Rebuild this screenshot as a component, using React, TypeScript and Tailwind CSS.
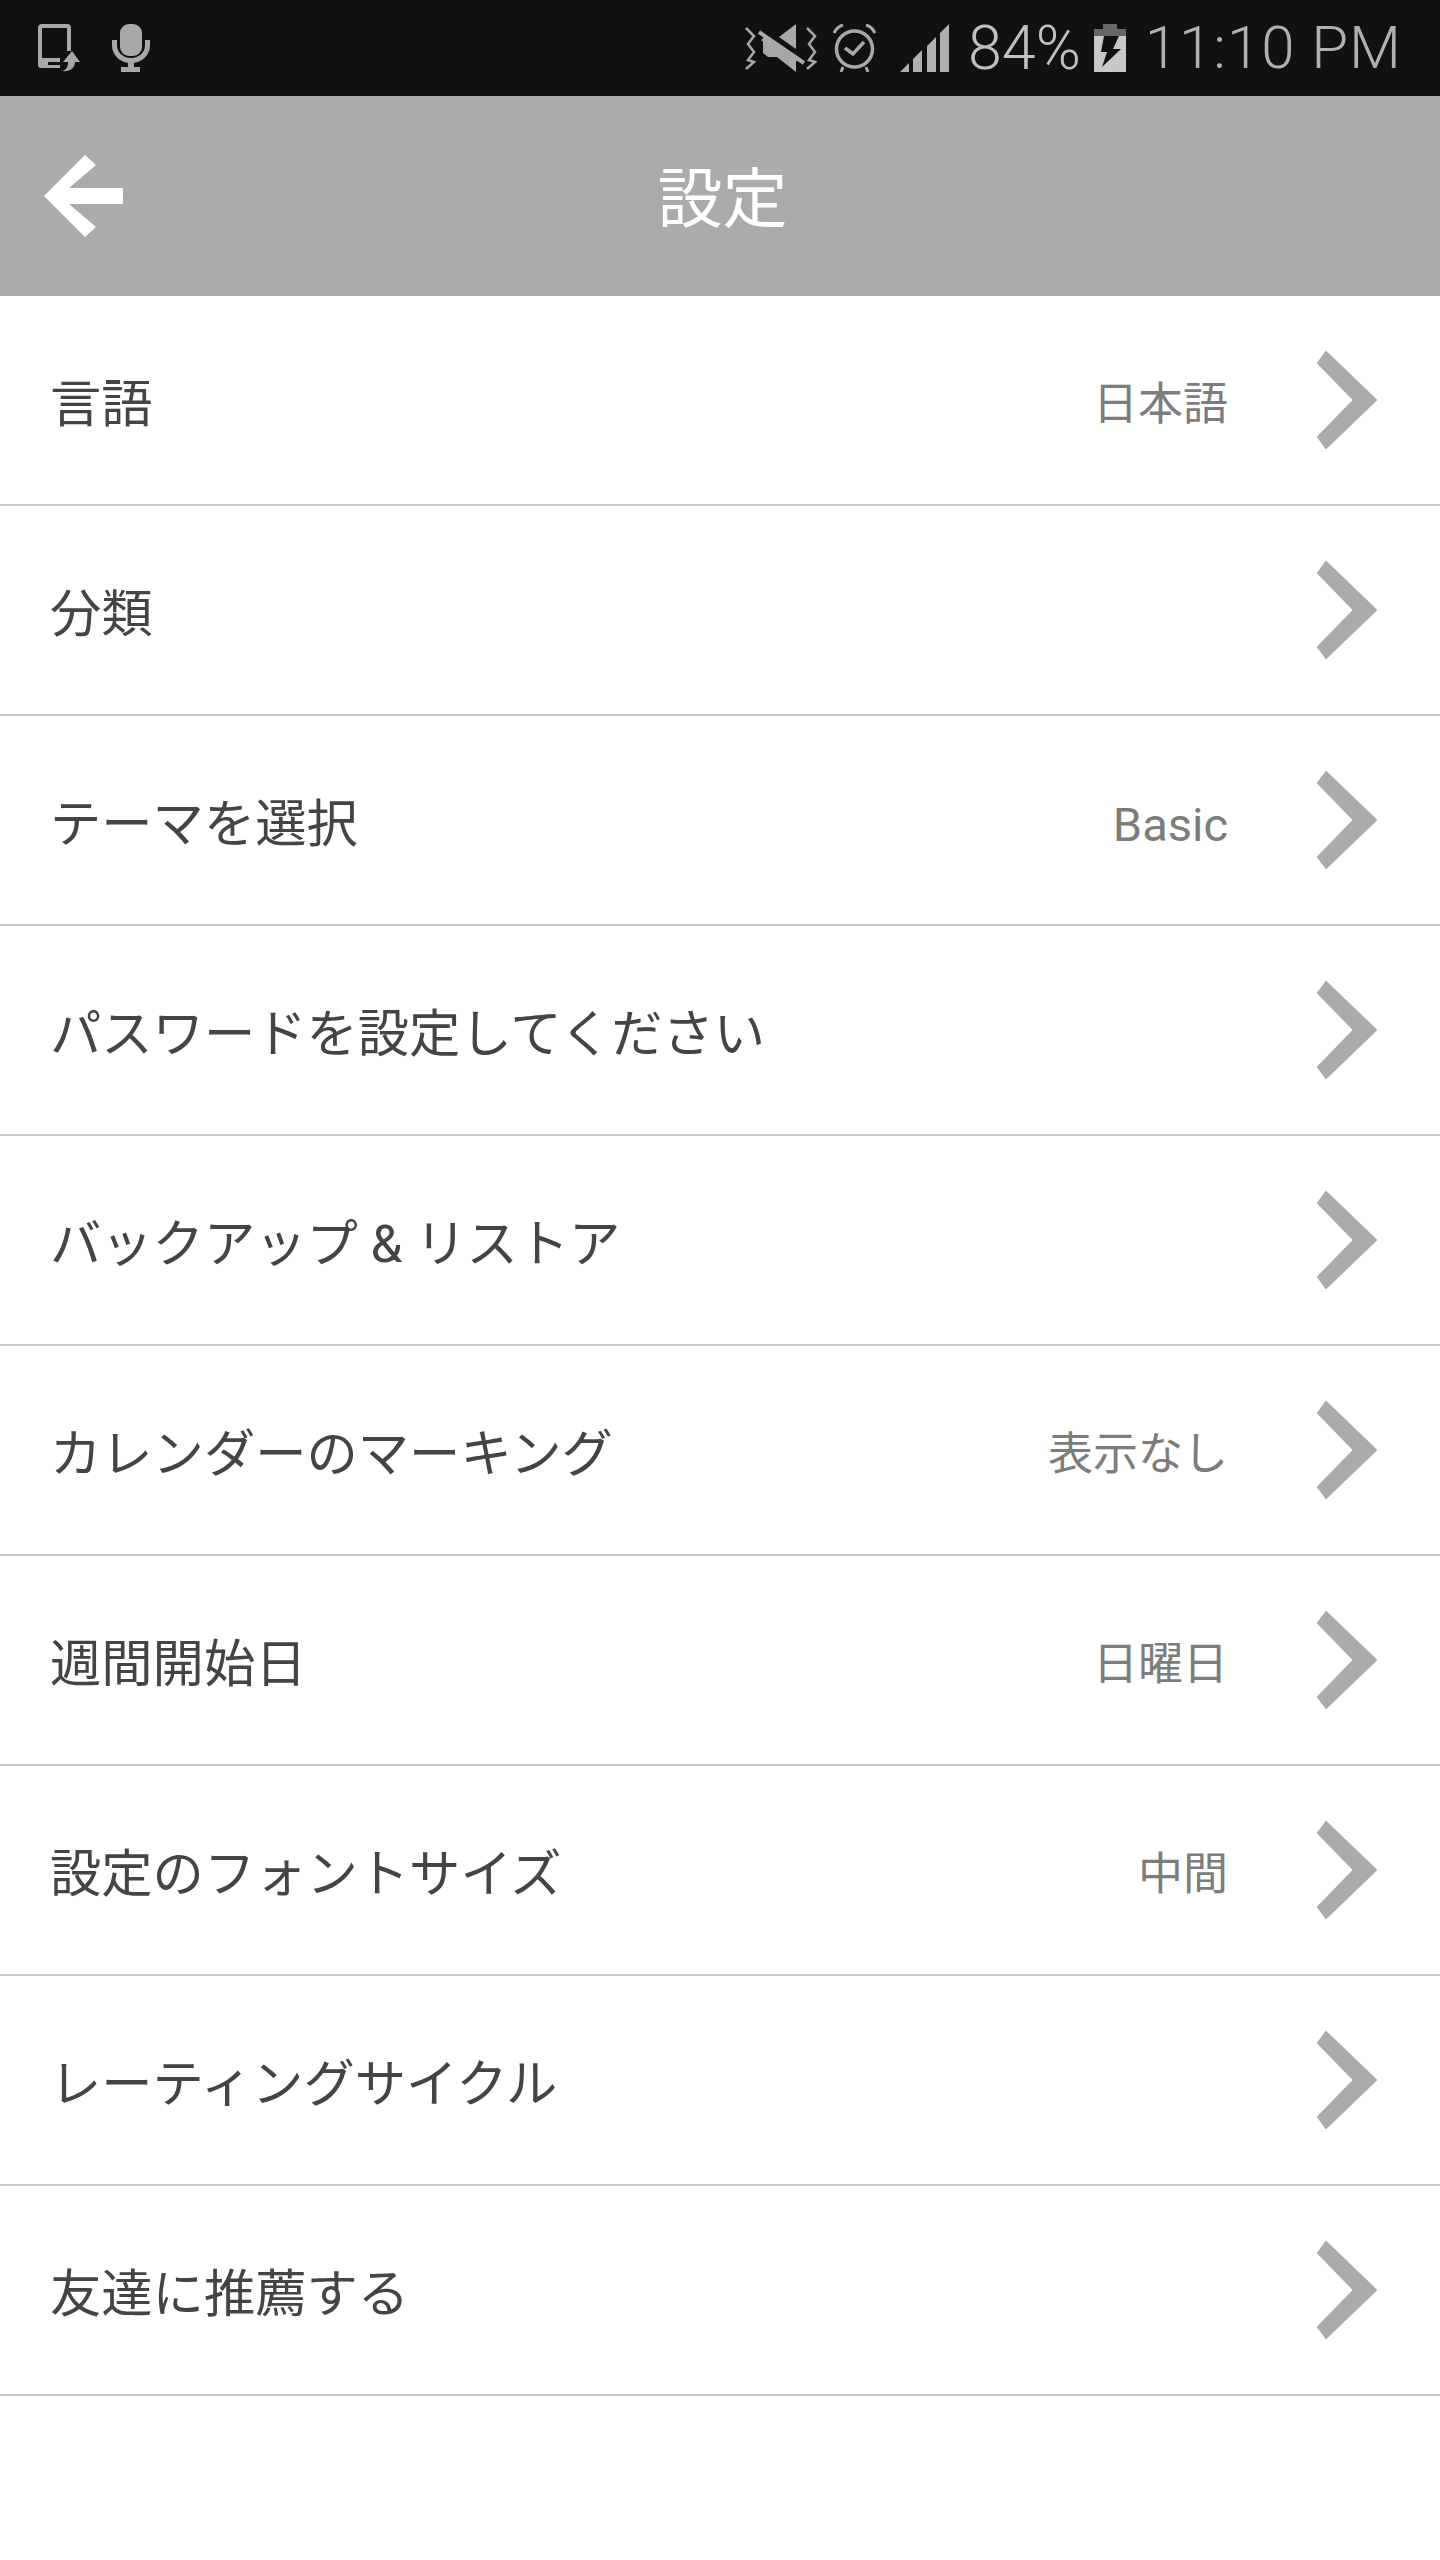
const font = { fontFamily: 'Roboto, "Noto Sans CJK JP", sans-serif' };
const thin = { fontFamily: "Roboto, sans-serif", fontWeight: 300 };

const rows = [
  { label: "言語", value: "日本語" },
  { label: "分類" },
  { label: "テーマを選択", value: "Basic", latin: true },
  { label: "パスワードを設定してください" },
  { label: "バックアップ & リストア" },
  { label: "カレンダーのマーキング", value: "表示なし" },
  { label: "週間開始日", value: "日曜日" },
  { label: "設定のフォントサイズ", value: "中間" },
  { label: "レーティングサイクル" },
  { label: "友達に推薦する" },
];

const StatusBar = () => (
  <div className="flex h-[96px] items-center justify-between bg-[#111111] pl-[38px] pr-[38px]">
    <div className="flex items-center gap-[32px]">
      <svg width="42" height="48" viewBox="0 0 42 48" fill="none">
        <path d="M2 38V4a2 2 0 0 1 2-2h25a2 2 0 0 1 2 2v23" stroke="#a8a8a8" strokeWidth="4" />
        <path d="M0 34h22v10H3a3 3 0 0 1-3-3z" fill="#a8a8a8" />
        <rect x="10" y="38" width="12" height="3" fill="#111111" />
        <path d="M34 27l8 11h-5c0 5-4 10-13 9 4-1 6-4 6-9h-5z" fill="#a8a8a8" />
      </svg>
      <svg width="38" height="48" viewBox="0 0 38 48" fill="none">
        <rect x="8" y="0" width="22" height="32" rx="9" fill="#a8a8a8" />
        <path d="M2.500 16v5c0 9 7 15.500 16.500 15.500s16.500-6.500 16.500-15.500v-5" stroke="#a8a8a8" strokeWidth="5" />
        <rect x="9" y="43" width="19" height="5" fill="#a8a8a8" />
        <rect x="16" y="37" width="6" height="7" fill="#a8a8a8" />
      </svg>
    </div>
    <div className="flex items-center">
      <svg width="72" height="48" viewBox="0 0 72 48" fill="none" className="mr-[16px]">
        <path d="M1 4l8 8-6 8 6 8-6 8 6 2-8 7M62 4l8 8-6 8 6 8-6 8 6 2-8 7" stroke="#a8a8a8" strokeWidth="2.500" />
        <path d="M51 0v25L34 13z" fill="#a8a8a8" />
        <path d="M18 14v15l5 4h9l19 15V38z" fill="#a8a8a8" />
        <path d="M14 8l45 31" stroke="#a8a8a8" strokeWidth="4" />
        <path d="M18 14l33 24" stroke="#a8a8a8" strokeWidth="6" />
      </svg>
      <svg width="43" height="48" viewBox="0 0 43 48" fill="none" className="mr-[24px]">
        <circle cx="21.500" cy="25" r="18" stroke="#a8a8a8" strokeWidth="3.500" />
        <path d="M12 24l8 6 11-12" stroke="#a8a8a8" strokeWidth="3.500" />
        <path d="M1 9c2-4 5-7 9-8M42 9c-2-4-5-7-9-8M10 43l-2 5M33 43l2 5" stroke="#a8a8a8" strokeWidth="3" />
      </svg>
      <svg width="49" height="48" viewBox="0 0 49 48" className="mr-[19px]">
        <path d="M0 48l9-9v9zM13 48V35l9-9v22zM27 48V22l9-9v35zM40 48V9l9-9v48z" fill="#b0b0b0" />
      </svg>
      <span className="mr-[13px] text-[61px] leading-none text-[#c0c0c0]" style={thin}>84%</span>
      <svg width="32" height="48" viewBox="0 0 32 48" className="mr-[19px]">
        <rect x="9" y="0" width="14" height="6" fill="#666666" />
        <rect x="0" y="5" width="32" height="7" fill="#666666" />
        <rect x="0" y="12" width="32" height="36" fill="#c8c8c8" />
        <path d="M10 12h15l-6 13h8L8 43l5-15H7z" fill="#111111" />
      </svg>
      <span className="text-[60px] leading-none tracking-[1px] text-[#b0b0b0]" style={thin}>11:10 PM</span>
    </div>
  </div>
);

const Chevron = () => (
  <svg width="60" height="98" viewBox="0 0 60 98">
    <polygon points="9,1 59,49 9,97 1,86 37,49 1,12" fill="#ababab" stroke="#ababab" strokeWidth="2" strokeLinejoin="round" />
  </svg>
);

const App = () => {
  return (
    <div className="min-h-[2560px] bg-white" style={font}>
      <StatusBar />
      <header className="relative flex h-[200px] items-center justify-center bg-[#ababab] pl-[5px]">
        <svg width="79" height="82" viewBox="0 0 79 82" className="absolute left-[44px] top-[59px]">
          <polygon points="0,41 41,0 52,10 25,33 79,33 79,49 25,49 52,72 41,82" fill="#ffffff" />
        </svg>
        <h1 className="pt-[10px] text-[65px] font-normal text-white">設定</h1>
      </header>
      <ul>
        {rows.map((row) => (
          <li key={row.label} className="flex h-[210px] items-center border-b-2 border-[#c8c8c8] pl-[50px] pr-[63px]">
            <span className="flex-1 pt-[10px] text-[51.3px] text-[#444444]">{row.label}</span>
            {row.value && (
              <span className={row.latin ? "pt-[10px] text-[47px] text-[#7c7c7c]" : "pt-[10px] text-[45px] text-[#7c7c7c]"}>
                {row.value}
              </span>
            )}
            <span className="ml-[89px] flex w-[60px] shrink-0 items-center">
              <Chevron />
            </span>
          </li>
        ))}
      </ul>
    </div>
  );
};

export default App;
